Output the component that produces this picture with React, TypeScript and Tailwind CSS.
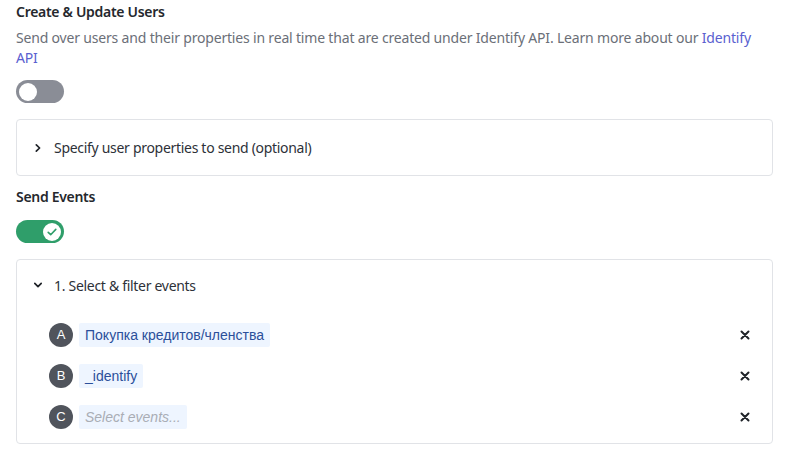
import React from "react";

function Toggle({ on }: { on: boolean }) {
  return (
    <div
      className={`flex h-[23px] w-12 items-center rounded-full px-[3px] ${
        on ? "justify-end bg-[#2f9e6a]" : "justify-start bg-[#8a8d96]"
      }`}
    >
      <span className="flex h-[18px] w-[18px] items-center justify-center rounded-full bg-white">
        {on && (
          <svg width="12" height="12" viewBox="0 0 12 12" fill="none">
            <path d="M2.2 6.3l2.5 2.4L9.8 3.4" stroke="#2f9e6a" strokeWidth="1.6" strokeLinecap="round" strokeLinejoin="round" />
          </svg>
        )}
      </span>
    </div>
  );
}

function Chevron({ down }: { down?: boolean }) {
  return (
    <svg width="10" height="10" viewBox="0 0 10 10" fill="none" className={down ? "rotate-90" : ""}>
      <path d="M3.3 1.8L6.6 5L3.3 8.2" stroke="#1f2328" strokeWidth="1.7" strokeLinecap="round" strokeLinejoin="round" />
    </svg>
  );
}

function XIcon() {
  return (
    <svg width="10" height="10" viewBox="0 0 10 10" fill="none">
      <path d="M1.5 1.5l7 7M8.5 1.5l-7 7" stroke="#1f2328" strokeWidth="2" strokeLinecap="round" />
    </svg>
  );
}

const rows = [
  { letter: "A", label: "Покупка кредитов/членства", placeholder: false },
  { letter: "B", label: "_identify", placeholder: false },
  { letter: "C", label: "Select events...", placeholder: true },
];

export default function App() {
  return (
    <div className="min-h-[452px] bg-white px-4 pt-[2px] font-['Noto_Sans',sans-serif] text-[14px] text-[#2d3138]">
      <h2 className="text-[14px] font-semibold leading-[20px] tracking-[-0.3px] text-[#25282d]">Create &amp; Update Users</h2>
      <p className="mt-[6px] text-[14px] leading-[20px] tracking-[-0.18px] text-[#6b6f78]">
        Send over users and their properties in real time that are created under Identify API. Learn more about our{" "}
        <a className="text-[#5a5fd0]">Identify</a> <a className="text-[#5a5fd0]">API</a>
      </p>
      <div className="mt-[12px]">
        <Toggle on={false} />
      </div>

      <div className="mt-[16px] flex h-[57px] items-center gap-[11px] rounded border border-[#e1e3e7] pl-[16px]">
        <Chevron />
        <span className="tracking-[-0.3px]">Specify user properties to send (optional)</span>
      </div>

      <h2 className="mt-[11px] text-[14px] font-semibold leading-[20px] tracking-[-0.3px] text-[#25282d]">Send Events</h2>
      <div className="mt-[13px]">
        <Toggle on={true} />
      </div>

      <div className="mt-[16px] rounded border border-[#e1e3e7] pb-[14px]">
        <div className="flex h-[50px] items-center gap-[11px] pl-[16px]">
          <Chevron down />
          <span className="tracking-[-0.3px]">1. Select &amp; filter events</span>
        </div>
        <div className="mt-[13px] flex flex-col gap-[17px] pl-[32px] pr-[22px]">
          {rows.map((r) => (
            <div key={r.letter} className="flex h-[24px] items-center">
              <span className="flex h-[24px] w-[24px] items-center justify-center rounded-full bg-[#50545c] font-['Liberation_Sans',Arial,sans-serif] text-[13px] text-white">
                {r.letter}
              </span>
              <span
                className={`ml-[6px] flex h-[24px] items-center rounded-[2px] bg-[#eef5ff] px-[6px] font-['Liberation_Sans',Arial,sans-serif] text-[14px] ${
                  r.placeholder ? "italic text-[#a9adb5]" : "text-[#2b4f9a]"
                }`}
              >
                {r.label}
              </span>
              <span className="ml-auto">
                <XIcon />
              </span>
            </div>
          ))}
        </div>
      </div>
    </div>
  );
}
